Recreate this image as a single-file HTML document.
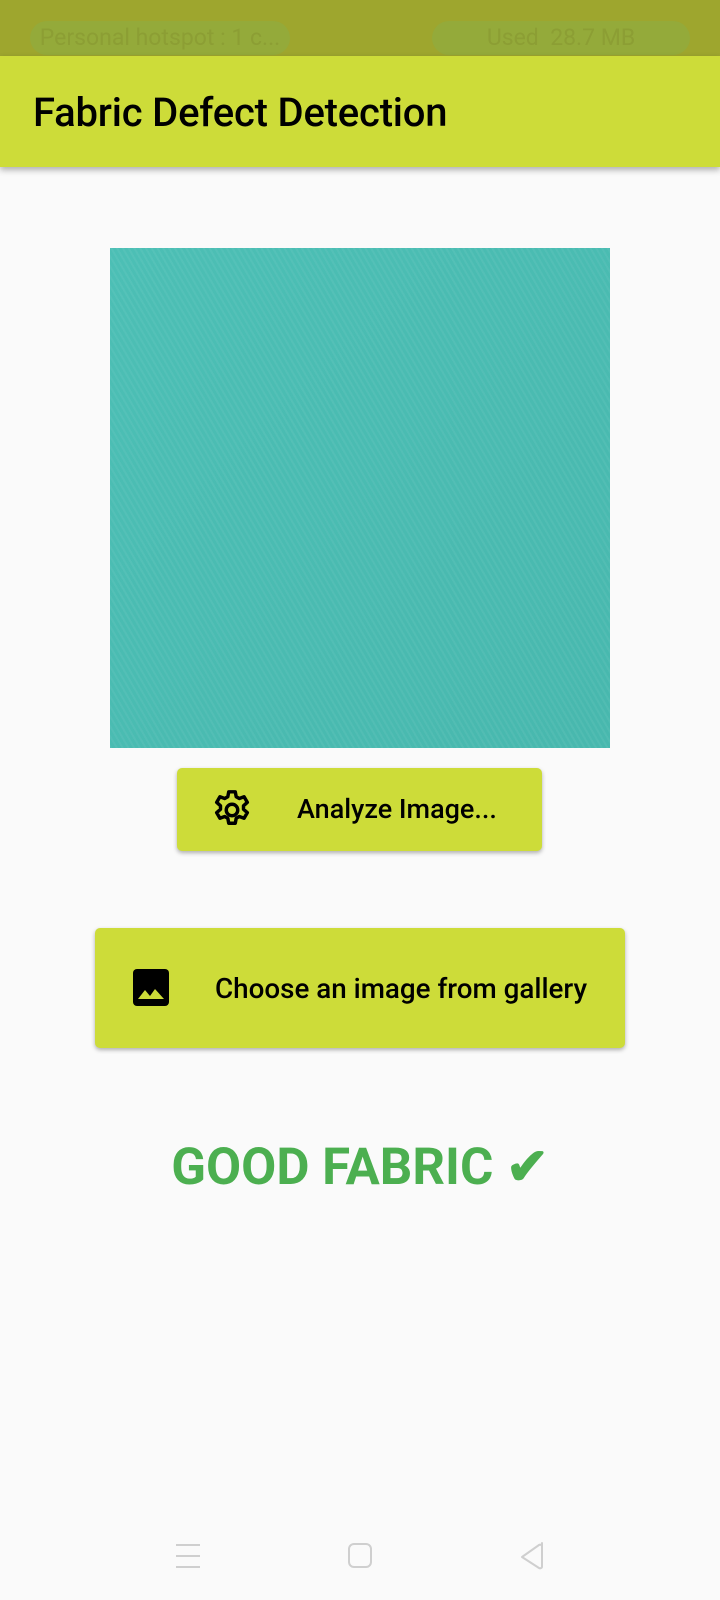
<!DOCTYPE html>
<html><head><style>
*{margin:0;padding:0;box-sizing:border-box}
body{width:720px;height:1600px;background:#fafafa;position:relative;overflow:hidden;font-family:"Roboto","Liberation Sans",sans-serif}
.sb{position:absolute;left:0;top:0;width:720px;height:56px;background:#9ea62e}
.pill{position:absolute;top:21px;height:34px;border-radius:17px;background:#94aa3a;color:#8c9e34;font-size:23px;line-height:34px;text-align:center}
.ab{position:absolute;left:0;top:56px;width:720px;height:111px;background:#cddc39;box-shadow:0 3px 6px rgba(0,0,0,.3)}
.ab h1{position:absolute;left:33px;top:33px;font-size:40px;font-weight:500;color:#000;letter-spacing:-0.2px}
.img{position:absolute;left:110px;top:248px;width:500px;height:500px;background:#4bbdb3;background-image:repeating-linear-gradient(60deg,rgba(255,255,255,.05) 0 2px,transparent 2px 5px),linear-gradient(135deg,#4cbfb5,#48b8ae)}
.btn{position:absolute;background:#cddc39;border-radius:5px;box-shadow:0 2px 4px rgba(0,0,0,.3)}
.t{position:absolute;color:#000;font-size:27px;font-weight:500;white-space:nowrap}
.good{position:absolute;left:0;width:720px;top:1138px;text-align:center;font-size:51px;font-weight:bold;color:#4caf50}
</style></head><body>
<div class="sb"><div class="pill" style="left:30px;width:260px">Personal hotspot : 1 c...</div><div class="pill" style="left:432px;width:258px">Used &nbsp;28.7 MB</div></div>
<div class="ab"><h1>Fabric Defect Detection</h1></div>
<div class="img"></div>
<div class="btn" style="left:177px;top:768px;width:365px;height:83px">
<svg style="position:absolute;left:32px;top:19px" width="46" height="46" viewBox="0 0 24 24"><path fill="none" stroke="#000" stroke-width="1.8" stroke-linejoin="round" d="M10.3 2.5h3.4l.5 2.6 1.6.9 2.5-.9 1.7 2.9-2 1.8v1.8l2 1.8-1.7 2.9-2.5-.9-1.6.9-.5 2.6h-3.4l-.5-2.6-1.6-.9-2.5.9-1.7-2.9 2-1.8v-1.8l-2-1.8 1.7-2.9 2.5.9 1.6-.9z"/><circle cx="12" cy="12" r="3" fill="none" stroke="#000" stroke-width="1.8"/></svg>
<div class="t" style="left:120px;top:25px">Analyze Image...</div></div>
<div class="btn" style="left:95px;top:928px;width:530px;height:120px">
<svg style="position:absolute;left:38px;top:41px" width="36" height="37" viewBox="0 0 36 37"><rect x="0" y="0" width="36" height="37" rx="4" fill="#000"/><path d="M5 30l7-9 5 6 5-7 9 10z" fill="#cddc39"/></svg>
<div class="t" style="left:120px;top:44px;font-size:27.8px">Choose an image from gallery</div></div>
<div class="good">GOOD FABRIC ✔</div>
<svg style="position:absolute;left:170px;top:1535px" width="390" height="45"><g fill="none" stroke="#cfcfcf" stroke-width="2"><path d="M6 10h24M6 21h24M6 32h24"/><rect x="179" y="9" width="22" height="23" rx="5"/><path d="M372 8v24a2 2 0 0 1-3 1l-17-11 17-12a2 2 0 0 1 3 1z" stroke-linejoin="round"/></g></svg>
</body></html>
